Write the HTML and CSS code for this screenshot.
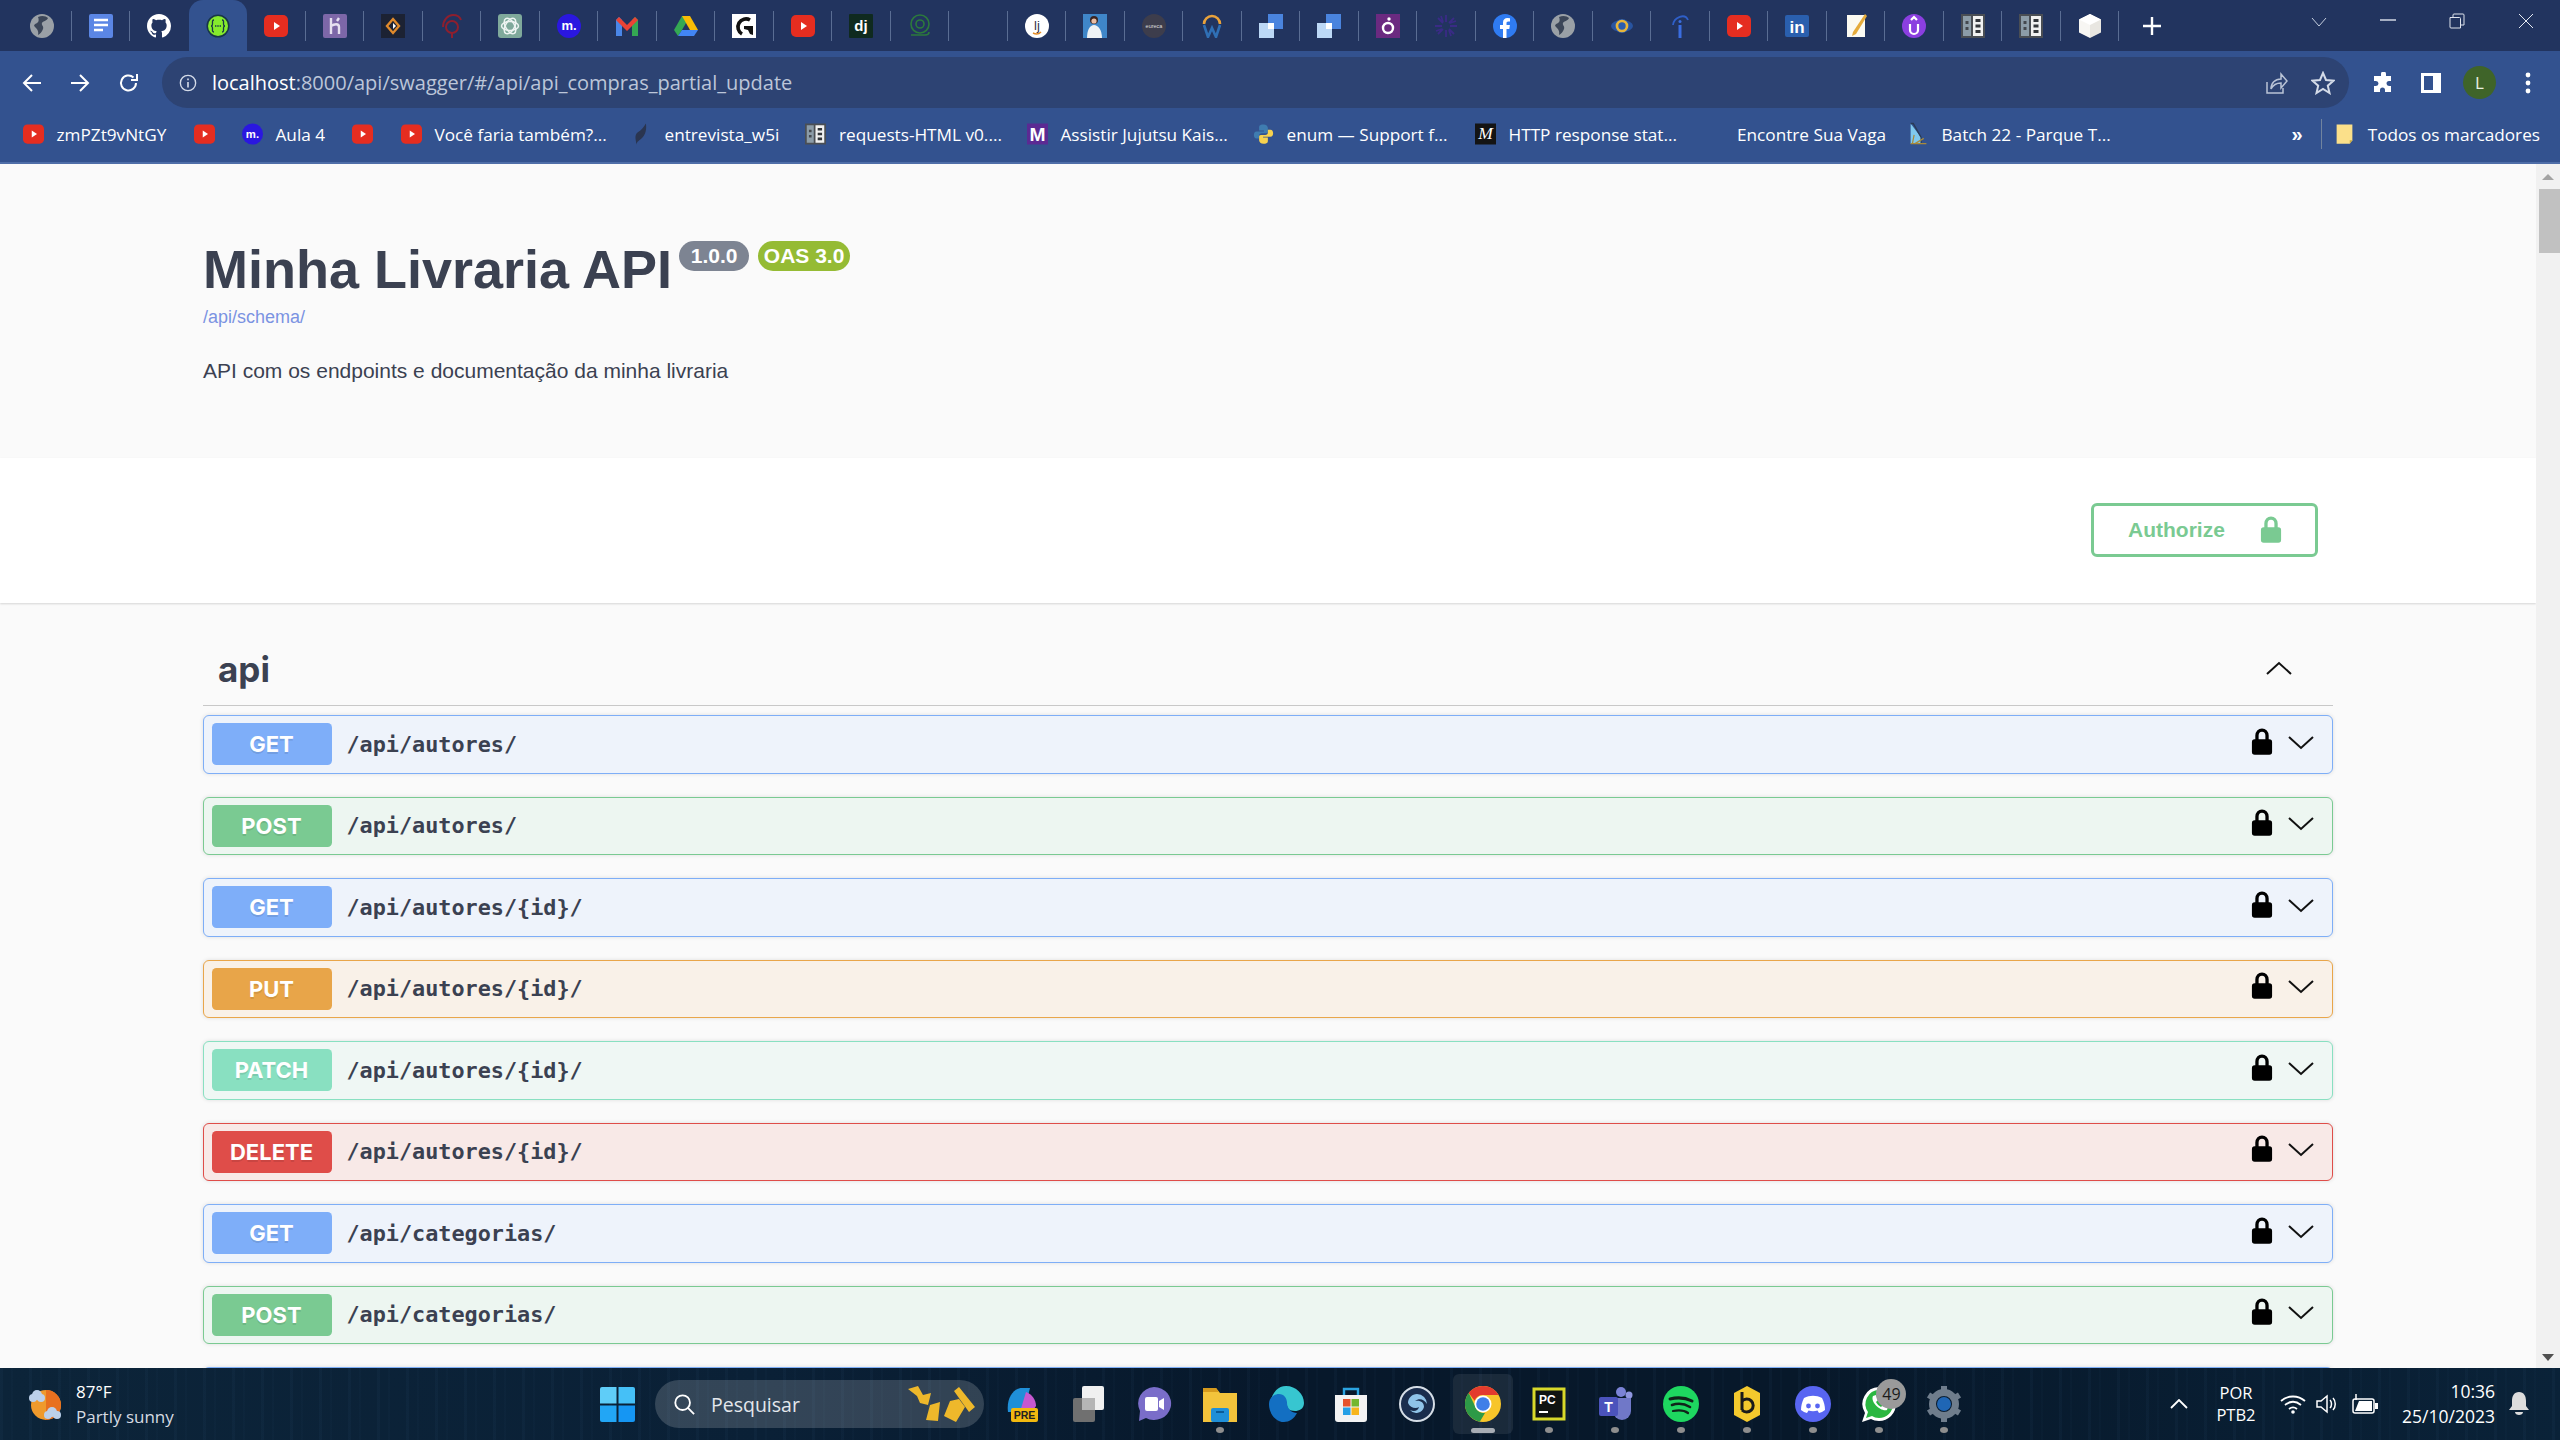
FILE: index.html
```html
<!DOCTYPE html>
<html lang="pt-BR">
<head>
  <meta charset="utf-8">
  <title>Minha Livraria API</title>
  <link rel="stylesheet" href="styles.css">
</head>
<body>
  <svg class="sprites" xmlns="http://www.w3.org/2000/svg">
    <symbol id="i-globe" viewBox="0 0 24 24"><circle cx="12" cy="12" r="12" fill="#9aa0a6"/><path d="M8 3c4-2 8-1 10 1-1 3-5 3-6 5s2 3 1 6-3 5-5 6c1-4-1-6-3-8s0-3 2-4 2-4 1-6z" fill="#3c4658"/></symbol>
    <symbol id="i-docs" viewBox="0 0 24 24"><rect x="0" width="24" height="24" rx="2" fill="#5b86e5"/><path d="M5 6h14M5 11h14M5 16h9" stroke="#fff" stroke-width="2.4"/></symbol>
    <symbol id="i-github" viewBox="0 0 16 16"><path fill="#fff" d="M8 0C3.58 0 0 3.58 0 8c0 3.54 2.29 6.53 5.47 7.59.4.07.55-.17.55-.38 0-.19-.01-.82-.01-1.49-2.01.37-2.53-.49-2.69-.94-.09-.23-.48-.94-.82-1.13-.28-.15-.68-.52-.01-.53.63-.01 1.08.58 1.23.82.72 1.21 1.87.87 2.33.66.07-.52.28-.87.51-1.07-1.78-.2-3.64-.89-3.64-3.95 0-.87.31-1.59.82-2.15-.08-.2-.36-1.02.08-2.12 0 0 .67-.21 2.2.82.64-.18 1.32-.27 2-.27.68 0 1.36.09 2 .27 1.53-1.04 2.2-.82 2.2-.82.44 1.1.16 1.92.08 2.12.51.56.82 1.27.82 2.15 0 3.07-1.87 3.75-3.65 3.95.29.25.54.73.54 1.48 0 1.07-.01 1.93-.01 2.2 0 .21.15.46.55.38A8.013 8.013 0 0016 8c0-4.42-3.58-8-8-8z"/></symbol>
    <symbol id="i-swagger" viewBox="0 0 24 24"><circle cx="12" cy="12" r="11.5" fill="#173647"/><circle cx="12" cy="12" r="10" fill="#85ea2d"/><path d="M8 6c-2 0-1.500 2-1.500 4S5 12 5 12s1.500 0 1.500 2S6 18 8 18M16 6c2 0 1.500 2 1.500 4s1.500 2 1.500 2-1.500 0-1.500 2 .5 4-1.500 4" fill="none" stroke="#173647" stroke-width="1.300"/><path d="M9 12h1.400M11.300 12h1.400M13.600 12H15" stroke="#173647" stroke-width="1.500"/></symbol>
    <symbol id="i-yt" viewBox="0 0 24 24"><rect y="1" width="24" height="22" rx="5" fill="#e52d20"/><path d="M10 8l6 4-6 4z" fill="#fff"/></symbol>
    <symbol id="i-heroku" viewBox="0 0 24 24"><rect width="24" height="24" rx="2" fill="#7d67a8"/><path d="M8 4v16M8 12c3-2 8-3 8 1v7M16 4l-2 3" fill="none" stroke="#e6e0f0" stroke-width="2.400"/></symbol>
    <symbol id="i-diamond" viewBox="0 0 24 24"><rect width="24" height="24" fill="#1c2233"/><path d="M12 5l6 7-6 7-6-7z" fill="none" stroke="#e08a2c" stroke-width="2.400"/><path d="M12 9l3 3-3 3z" fill="#fff"/></symbol>
    <symbol id="i-swirl" viewBox="0 0 24 24"><g fill="none" stroke="#8e1f2e" stroke-width="2"><path d="M3 13C3 6 8 1 13 1c4 0 7 2 8 5"/><circle cx="12" cy="13" r="6"/><path d="M12 19v5"/></g></symbol>
    <symbol id="i-gpt" viewBox="0 0 24 24"><rect width="24" height="24" rx="3" fill="#7fa99b"/><g fill="none" stroke="#eef4f2" stroke-width="1.500"><ellipse cx="12" cy="12" rx="8.500" ry="4.500"/><ellipse cx="12" cy="12" rx="8.500" ry="4.500" transform="rotate(60 12 12)"/><ellipse cx="12" cy="12" rx="8.500" ry="4.500" transform="rotate(120 12 12)"/></g></symbol>
    <symbol id="i-m" viewBox="0 0 24 24"><circle cx="12" cy="12" r="12" fill="#2a17e0"/><text x="12" y="16" text-anchor="middle" font-family="Liberation Sans, sans-serif" font-weight="700" font-size="13" fill="#fff">m.</text></symbol>
    <symbol id="i-gmail" viewBox="0 0 24 24"><path d="M1 22V6l3-3 3 3v16z" fill="#4a86e8"/><path d="M17 22V6l3-3 3 3v16z" fill="#34a853"/><path d="M4 3l8 8 8-8 3 3-11 11L1 6z" fill="#ea4335"/></symbol>
    <symbol id="i-drive" viewBox="0 0 24 24"><path d="M8 2h8l-8 14-4 6-4-6z" fill="#34a853"/><path d="M8 2h8l8 14h-8z" fill="#f9bc05"/><path d="M4 22l4-6h16l-4 6z" fill="#4285f4"/></symbol>
    <symbol id="i-gbox" viewBox="0 0 24 24"><rect width="24" height="24" fill="#fff"/><path d="M18 6a8 8 0 1 0-8 14" fill="none" stroke="#111" stroke-width="3.600"/><path d="M12 12h9v9l-3-1-2-4-4-1z" fill="#111"/></symbol>
    <symbol id="i-dj" viewBox="0 0 24 24"><rect width="24" height="24" rx="1" fill="#0f2a1f"/><text x="12" y="17" text-anchor="middle" font-family="Liberation Sans, sans-serif" font-weight="700" font-size="15" fill="#fff">dj</text></symbol>
    <symbol id="i-rings" viewBox="0 0 24 24"><g fill="none" stroke="#2c7a3c" stroke-width="1.600"><circle cx="12" cy="10" r="9"/><circle cx="12" cy="10" r="4"/><path d="M3 21h14c3 0 4-1 4-3"/></g></symbol>
    <symbol id="i-ij" viewBox="0 0 24 24"><circle cx="12" cy="12" r="12" fill="#fff"/><text x="12" y="16" text-anchor="middle" font-family="Liberation Sans, sans-serif" font-size="13" fill="#334">lj</text><path d="M8 19c3 1.500 6 1 8-1" fill="none" stroke="#e58c25" stroke-width="1.400"/></symbol>
    <symbol id="i-photo" viewBox="0 0 24 24"><rect width="24" height="24" fill="#3f86c9"/><circle cx="11" cy="6" r="4" fill="#3a2420"/><circle cx="11" cy="7" r="2.600" fill="#e9bda4"/><path d="M4 24c0-8 3-13 7-13s8 5 8 13z" fill="#eef1f4"/></symbol>
    <symbol id="i-eureca" viewBox="0 0 24 24"><circle cx="12" cy="12" r="12" fill="#3d3d4c"/><text x="12" y="14" text-anchor="middle" font-family="Liberation Sans, sans-serif" font-size="5.500" fill="#ddd">eureca</text></symbol>
    <symbol id="i-work" viewBox="0 0 24 24"><path d="M4 10a8 8 0 0 1 16 0" fill="none" stroke="#e9a23b" stroke-width="2.600"/><path d="M4 11l4 12 4-9 4 9 4-12" fill="none" stroke="#2f6fb5" stroke-width="2.600"/></symbol>
    <symbol id="i-squares" viewBox="0 0 24 24"><rect x="9" width="15" height="15" fill="#4a84de"/><rect y="9" width="15" height="15" fill="#bcd8f6"/><path d="M9 9h6v6H9z" fill="#fff"/></symbol>
    <symbol id="i-purple-o" viewBox="0 0 24 24"><rect width="24" height="24" fill="#6b2a80"/><circle cx="12" cy="14" r="5" fill="none" stroke="#fff" stroke-width="2.400"/><circle cx="13" cy="5" r="1.700" fill="#fff"/></symbol>
    <symbol id="i-spin" viewBox="0 0 24 24"><g stroke="#3a2b86" stroke-width="1.800"><path d="M12 1v7M12 16v7M1 12h7M16 12h7M4 4l5 5M15 15l5 5M20 4l-5 5M9 15l-5 5M7 2l2 6M17 22l-2-6M2 17l6-2M22 7l-6 2"/></g></symbol>
    <symbol id="i-fb" viewBox="0 0 24 24"><circle cx="12" cy="12" r="12" fill="#2f7bf2"/><path d="M10 24V15H7v-4h3V8.500C10 5.500 11.800 4 14.500 4l2.500.2V7.500h-1.700c-1.400 0-1.800.8-1.800 1.700V11h3.400l-.6 4H13.500v9z" fill="#fff"/></symbol>
    <symbol id="i-ring" viewBox="0 0 24 24"><ellipse cx="12" cy="12" rx="11" ry="6" fill="#2a5db0" opacity=".8"/><circle cx="12" cy="12" r="7" fill="#2a5db0"/><circle cx="12" cy="12" r="5" fill="none" stroke="#e8b53a" stroke-width="2.600"/></symbol>
    <symbol id="i-info" viewBox="0 0 24 24"><path d="M5 11c1-8 12-12 15-5" fill="none" stroke="#2f5fc8" stroke-width="1.800"/><path d="M12 11v13" stroke="#3a6de0" stroke-width="3"/><circle cx="12" cy="7.500" r="1.500" fill="#3a6de0"/></symbol>
    <symbol id="i-in" viewBox="0 0 24 24"><rect y="1" width="24" height="22" rx="2" fill="#2a5fae"/><text x="12" y="19" text-anchor="middle" font-family="Liberation Sans, sans-serif" font-weight="700" font-size="17" fill="#fff">in</text></symbol>
    <symbol id="i-note" viewBox="0 0 24 24"><path d="M3 1h18v22H3z" fill="#fbfaf2"/><path d="M9 18L21 0l2 2L12 20l-4 2z" fill="#e5ab3c"/></symbol>
    <symbol id="i-purple-u" viewBox="0 0 24 24"><circle cx="12" cy="12" r="12" fill="#8b3fe0"/><path d="M8 10v6a4 4 0 0 0 8 0v-6M9 6l3-3 3 3" fill="none" stroke="#fff" stroke-width="2.200"/></symbol>
    <symbol id="i-bars" viewBox="0 0 24 24"><rect width="24" height="24" fill="#4a4e54"/><rect x="2" y="2" width="8" height="20" fill="#8c9ca8"/><rect x="12" y="2" width="10" height="20" fill="#f1f1f1"/><path d="M4.500 7h3v3h-3zM4.500 13h3v3h-3z" fill="#44484e"/><path d="M14.500 5h5v3h-5zM14.500 10.500h5v3h-5zM14.500 16h5v3h-5z" fill="#33363b"/></symbol>
    <symbol id="i-cube" viewBox="0 0 24 24"><path d="M12 0l11 5.500v13L12 24z" fill="#e8e6e1"/><path d="M12 0L1 5.500v13L12 24z" fill="#f7f6f3"/><path d="M1 5.500L12 0l11 5.500L12 11z" fill="#fff"/></symbol>
    <symbol id="i-feather" viewBox="0 0 24 24"><path d="M17 0c1 6 0 13-5 17-2 2-5 3-6 7 0-5-2-8 0-12 2-3 6-3 11-12z" fill="#2a3550"/></symbol>
    <symbol id="i-mbig" viewBox="0 0 24 24"><rect width="24" height="24" fill="#5b2a93"/><text x="12" y="20" text-anchor="middle" font-family="Liberation Sans, sans-serif" font-weight="700" font-size="22" fill="#fff">M</text></symbol>
    <symbol id="i-python" viewBox="0 0 24 24"><path d="M12 1C7 1 7 3 7 5v3h5.500v1H4c-2 0-3 2-3 4s1 4 3 4h3v-3c0-2 1-3 3-3h5c1.500 0 2-1 2-2V5c0-2-2-4-5-4z" fill="#3f7cb0"/><path d="M12 23c5 0 5-2 5-4v-3h-5.500v-1H20c2 0 3-2 3-4s-1-4-3-4h-3v3c0 2-1 3-3 3H9c-1.500 0-2 1-2 2v4c0 2 2 4 5 4z" fill="#f7d24f"/></symbol>
    <symbol id="i-mdark" viewBox="0 0 24 24"><rect width="24" height="24" fill="#141414"/><text x="12" y="18" text-anchor="middle" font-family="Liberation Serif, serif" font-style="italic" font-size="20" fill="#fff">M</text></symbol>
    <symbol id="i-batch" viewBox="0 0 24 24"><path d="M3 0l12 16v7H3z" fill="#7fc8ee"/><path d="M3 0h3l9 16v7" fill="none" stroke="#2a3a55" stroke-width="1.500"/><path d="M3 23h18M8 23l10-6M5 23l2-10" stroke="#a98a3a" stroke-width="1.400"/></symbol>
    <symbol id="i-folder" viewBox="0 0 24 24"><path d="M3 1h18v18l-3 4H3z" fill="#fbe08a"/><path d="M18 23v-4h3z" fill="#c9a93e"/></symbol>
    <symbol id="i-lock" viewBox="0 0 24 30"><path d="M6.500 13V8a5.500 6 0 0 1 11 0v5" fill="none" stroke="currentColor" stroke-width="3.600"/><rect x="1" y="12" width="22" height="17" rx="3" fill="currentColor"/></symbol>
    <symbol id="i-chev" viewBox="0 0 26 14"><path d="M1 1l12 11L25 1" fill="none" stroke="currentColor" stroke-width="2"/></symbol>
  </svg>

  <header class="tabstrip">
    <div class="tab"><svg><use href="#i-globe"/></svg></div>
    <div class="tab"><svg><use href="#i-docs"/></svg></div>
    <div class="tab no-sep"><svg><use href="#i-github"/></svg></div>
    <div class="tab active"><svg><use href="#i-swagger"/></svg></div>
    <div class="tab"><svg><use href="#i-yt"/></svg></div>
    <div class="tab"><svg><use href="#i-heroku"/></svg></div>
    <div class="tab"><svg><use href="#i-diamond"/></svg></div>
    <div class="tab"><svg><use href="#i-swirl"/></svg></div>
    <div class="tab"><svg><use href="#i-gpt"/></svg></div>
    <div class="tab"><svg><use href="#i-m"/></svg></div>
    <div class="tab"><svg><use href="#i-gmail"/></svg></div>
    <div class="tab"><svg><use href="#i-drive"/></svg></div>
    <div class="tab"><svg><use href="#i-gbox"/></svg></div>
    <div class="tab"><svg><use href="#i-yt"/></svg></div>
    <div class="tab"><svg><use href="#i-dj"/></svg></div>
    <div class="tab"><svg><use href="#i-rings"/></svg></div>
    <div class="tab"></div>
    <div class="tab"><svg><use href="#i-ij"/></svg></div>
    <div class="tab"><svg><use href="#i-photo"/></svg></div>
    <div class="tab"><svg><use href="#i-eureca"/></svg></div>
    <div class="tab"><svg><use href="#i-work"/></svg></div>
    <div class="tab"><svg><use href="#i-squares"/></svg></div>
    <div class="tab"><svg><use href="#i-squares"/></svg></div>
    <div class="tab"><svg><use href="#i-purple-o"/></svg></div>
    <div class="tab"><svg><use href="#i-spin"/></svg></div>
    <div class="tab"><svg><use href="#i-fb"/></svg></div>
    <div class="tab"><svg><use href="#i-globe"/></svg></div>
    <div class="tab"><svg><use href="#i-ring"/></svg></div>
    <div class="tab"><svg><use href="#i-info"/></svg></div>
    <div class="tab"><svg><use href="#i-yt"/></svg></div>
    <div class="tab"><svg><use href="#i-in"/></svg></div>
    <div class="tab"><svg><use href="#i-note"/></svg></div>
    <div class="tab"><svg><use href="#i-purple-u"/></svg></div>
    <div class="tab"><svg><use href="#i-bars"/></svg></div>
    <div class="tab"><svg><use href="#i-bars"/></svg></div>
    <div class="tab"><svg><use href="#i-cube"/></svg></div>
    <div class="new-tab">
      <svg viewBox="0 0 18 18"><path d="M9 0v18M0 9h18" stroke="#fff" stroke-width="2.400"/></svg>
    </div>
    <div class="win-controls">
      <svg viewBox="0 0 16 16"><path d="M1 5l7 8 7-8" fill="none" stroke="#c5cede" stroke-width="1"/></svg>
      <svg viewBox="0 0 16 16"><path d="M0 7h16" stroke="#dfe4ee" stroke-width="1.400"/></svg>
      <svg viewBox="0 0 16 16"><path d="M1 4.500h9.500a1 1 0 0 1 1 1V15H2a1 1 0 0 1-1-1zM4 4V2a1 1 0 0 1 1-1h9a1 1 0 0 1 1 1v10h-3.500" fill="none" stroke="#dfe4ee" stroke-width="1"/></svg>
      <svg viewBox="0 0 16 16"><path d="M1 1l14 14M15 1L1 15" stroke="#e6eaf2" stroke-width="1"/></svg>
    </div>
  </header>

  <div class="toolbar">
    <div class="tool"><svg viewBox="0 0 22 22"><path d="M20 11H3M11 3l-8 8 8 8" fill="none" stroke="#fff" stroke-width="2"/></svg></div>
    <div class="tool"><svg viewBox="0 0 22 22"><path d="M2 11h17M11 3l8 8-8 8" fill="none" stroke="#fff" stroke-width="2"/></svg></div>
    <div class="tool"><svg viewBox="0 0 22 22"><path d="M18 11a7.500 7.500 0 1 1-2.500-5.600M19 2v6h-6" fill="none" stroke="#fff" stroke-width="2"/></svg></div>
    <div class="omnibox">
      <svg class="omni-info" viewBox="0 0 20 20"><circle cx="10" cy="10" r="8.500" fill="none" stroke="#d4dbe8" stroke-width="1.500"/><path d="M10 9v6M10 5v2" stroke="#d4dbe8" stroke-width="1.800"/></svg>
      <span class="url"><span class="host">localhost</span>:8000/api/swagger/#/api/api_compras_partial_update</span>
      <svg class="omni-share" viewBox="0 0 24 24"><path d="M3 11v11h16v-5M7 18c0-6 4-10 10-10V3l6 7-6 7v-5c-4 0-8 2-10 6z" fill="none" stroke="#b9c3d6" stroke-width="1.500"/></svg>
      <svg class="omni-star" viewBox="0 0 24 24"><path d="M12 2l3 7 7.500.7-5.700 5 1.700 7.300L12 18l-6.500 4 1.700-7.300-5.700-5L9 9z" fill="none" stroke="#d4dbe8" stroke-width="2"/></svg>
    </div>
    <div class="tool"><svg viewBox="0 0 22 22"><path d="M9 2a2.500 2.500 0 0 1 5 0v2h5v5h-2a2.500 2.500 0 0 0 0 5h2v6h-6v-2a2.500 2.500 0 0 0-5 0v2H2v-6h2a2.500 2.500 0 0 0 0-5H2V4h7z" fill="#fff"/></svg></div>
    <div class="tool"><svg viewBox="0 0 22 22"><path d="M1 1h20v20H1zM4 4v14h9V4z" fill="#fff" fill-rule="evenodd"/></svg></div>
    <div class="tool"><span class="avatar">L</span></div>
    <div class="tool"><svg viewBox="0 0 22 22"><g fill="#fff"><circle cx="11" cy="3" r="2.400"/><circle cx="11" cy="11" r="2.400"/><circle cx="11" cy="19" r="2.400"/></g></svg></div>
  </div>

  <nav class="bookmarks">
    <a class="bm"><svg><use href="#i-yt"/></svg>zmPZt9vNtGY</a>
    <a class="bm"><svg><use href="#i-yt"/></svg></a>
    <a class="bm"><svg><use href="#i-m"/></svg>Aula 4</a>
    <a class="bm"><svg><use href="#i-yt"/></svg></a>
    <a class="bm"><svg><use href="#i-yt"/></svg>Você faria também?...</a>
    <a class="bm"><svg><use href="#i-feather"/></svg>entrevista_w5i</a>
    <a class="bm"><svg><use href="#i-bars"/></svg>requests-HTML v0....</a>
    <a class="bm"><svg><use href="#i-mbig"/></svg>Assistir Jujutsu Kais...</a>
    <a class="bm"><svg><use href="#i-python"/></svg>enum — Support f...</a>
    <a class="bm"><svg><use href="#i-mdark"/></svg>HTTP response stat...</a>
    <a class="bm bm-noicon">Encontre Sua Vaga</a>
    <a class="bm"><svg><use href="#i-batch"/></svg>Batch 22 - Parque T...</a>
    <div class="bm-end">
      <span class="bm-more">»</span>
      <span class="bm-sep"></span>
      <a class="bm"><svg><use href="#i-folder"/></svg>Todos os marcadores</a>
    </div>
  </nav>

  <div class="viewport">
    <main class="page">
      <section class="info">
        <div class="wrapper">
          <div class="title-row">
            <h1>Minha Livraria API</h1>
            <span class="badge version">1.0.0</span>
            <span class="badge oas">OAS 3.0</span>
          </div>
          <a class="schema-link">/api/schema/</a>
          <p class="description">API com os endpoints e documentação da minha livraria</p>
        </div>
      </section>

      <section class="scheme">
        <div class="wrapper scheme-inner">
          <button class="authorize">Authorize <svg><use href="#i-lock"/></svg></button>
        </div>
      </section>

      <section class="wrapper">
        <div class="tag">
          <h2>api</h2>
          <svg class="tag-arrow"><use href="#i-chev"/></svg>
        </div>

        <div class="opblock get">
          <span class="method">GET</span><span class="path">/api/autores/</span>
          <svg class="row-lock"><use href="#i-lock"/></svg><svg class="row-chev"><use href="#i-chev"/></svg>
        </div>
        <div class="opblock post">
          <span class="method">POST</span><span class="path">/api/autores/</span>
          <svg class="row-lock"><use href="#i-lock"/></svg><svg class="row-chev"><use href="#i-chev"/></svg>
        </div>
        <div class="opblock get">
          <span class="method">GET</span><span class="path">/api/autores/{id}/</span>
          <svg class="row-lock"><use href="#i-lock"/></svg><svg class="row-chev"><use href="#i-chev"/></svg>
        </div>
        <div class="opblock put">
          <span class="method">PUT</span><span class="path">/api/autores/{id}/</span>
          <svg class="row-lock"><use href="#i-lock"/></svg><svg class="row-chev"><use href="#i-chev"/></svg>
        </div>
        <div class="opblock patch">
          <span class="method">PATCH</span><span class="path">/api/autores/{id}/</span>
          <svg class="row-lock"><use href="#i-lock"/></svg><svg class="row-chev"><use href="#i-chev"/></svg>
        </div>
        <div class="opblock delete">
          <span class="method">DELETE</span><span class="path">/api/autores/{id}/</span>
          <svg class="row-lock"><use href="#i-lock"/></svg><svg class="row-chev"><use href="#i-chev"/></svg>
        </div>
        <div class="opblock get">
          <span class="method">GET</span><span class="path">/api/categorias/</span>
          <svg class="row-lock"><use href="#i-lock"/></svg><svg class="row-chev"><use href="#i-chev"/></svg>
        </div>
        <div class="opblock post">
          <span class="method">POST</span><span class="path">/api/categorias/</span>
          <svg class="row-lock"><use href="#i-lock"/></svg><svg class="row-chev"><use href="#i-chev"/></svg>
        </div>
        <div class="opblock get"></div>
      </section>
    </main>
    <div class="scrollbar">
      <span class="sb-up"></span>
      <span class="sb-thumb"></span>
      <span class="sb-down"></span>
    </div>
  </div>

  <footer class="taskbar">
    <div class="weather">
      <svg viewBox="0 0 36 36"><ellipse cx="19" cy="19" rx="15" ry="15" fill="#ef9a2c"/><path d="M19 4a15 15 0 0 1 0 30z" fill="#e8701f"/><g fill="#bcd0ea"><circle cx="10" cy="9" r="5"/><circle cx="6" cy="12" r="4"/><circle cx="14" cy="12" r="4"/><circle cx="25" cy="26" r="5"/><circle cx="21" cy="29" r="4"/><circle cx="30" cy="29" r="4"/></g></svg>
      <div class="weather-text">
        <span>87°F</span>
        <span class="weather-sub">Partly sunny</span>
      </div>
    </div>
    <svg class="win-logo" viewBox="0 0 35 35"><path d="M0 2a2 2 0 0 1 2-2h14.500v16.500H0z" fill="#5fcdf8"/><path d="M18.500 0H33a2 2 0 0 1 2 2v14.500H18.500z" fill="#45c0f7"/><path d="M0 18.500h16.500V35H2a2 2 0 0 1-2-2z" fill="#22a6f5"/><path d="M18.500 18.500H35V33a2 2 0 0 1-2 2H18.500z" fill="#1596f3"/></svg>
    <div class="search">
      <svg class="search-glass" viewBox="0 0 24 24"><circle cx="10.500" cy="10.500" r="8" fill="none" stroke="#fff" stroke-width="2"/><path d="M16 16l7 7" stroke="#fff" stroke-width="2"/></svg>
      <span>Pesquisar</span>
      <svg class="search-deco" viewBox="0 0 68 36"><path d="M0 3l10-3 5 9 8-2-3 12-8-2-3-7zM18 34l4-15 10-3-2 19zM36 30l6-15 9-2 6 8-9 15zM46 5l5-4 16 20-6 5z" fill="#eeb82b"/></svg>
    </div>
    <div class="apps">
      <div class="app"><svg viewBox="0 0 36 36"><path d="M4 26C2 12 10 2 18 2h8l-6 24z" fill="#1f8fd8"/><path d="M16 26l6-20c6 2 10 8 10 14l-4 6z" fill="#c558d0"/><rect x="7" y="22" width="27" height="14" rx="2" fill="#f2b90f"/><text x="20.500" y="33" text-anchor="middle" font-family="Liberation Sans, sans-serif" font-weight="700" font-size="10.500" fill="#222">PRE</text></svg></div>
      <div class="app"><svg viewBox="0 0 36 36"><rect x="3" y="12" width="22" height="24" rx="2" fill="#707070"/><rect x="12" y="0" width="22" height="24" rx="2" fill="#f0f0f0"/><rect x="12" y="12" width="13" height="12" fill="#b5b5b5"/></svg></div>
      <div class="app"><svg viewBox="0 0 36 36"><path d="M18 1a17 16.500 0 1 1-8 31l-7 3 1-10A17 16.500 0 0 1 18 1z" fill="#7a6dc9"/><rect x="9" y="11" width="13" height="14" rx="2" fill="#fff"/><path d="M23 15l5-3v12l-5-3z" fill="#fff"/></svg></div>
      <div class="app app-dot"><svg viewBox="0 0 36 36"><path d="M1 2h13l4 5h17v29H1z" fill="#f3c33b"/><path d="M1 2h13l3 4H1z" fill="#d69a1d"/><rect x="9" y="22" width="18" height="14" rx="2" fill="#1f8fd8"/><path d="M14 26h8" stroke="#0b5c99" stroke-width="2"/></svg></div>
      <div class="app"><svg viewBox="0 0 36 36"><path d="M18 0c10 0 18 8 18 17 0 6-5 8-9 8-6 0-8-3-8-6 0-4-3-7-7-7-6 0-11 6-11 10C3 8 9 0 18 0z" fill="#37c6d0"/><path d="M1 18c0-6 5-10 10-10 5 0 8 4 8 9 0 6 5 10 10 10-3 6-8 9-13 9C8 36 1 28 1 18z" fill="#136fc2"/></svg></div>
      <div class="app"><svg viewBox="0 0 36 36"><path d="M2 9h32v24a3 3 0 0 1-3 3H5a3 3 0 0 1-3-3z" fill="#f3f3f3"/><path d="M11 9V3h14v6" fill="none" stroke="#2ba3e0" stroke-width="2.400"/><rect x="10" y="13" width="7.500" height="7.500" fill="#e5532d"/><rect x="18.500" y="13" width="7.500" height="7.500" fill="#74b72e"/><rect x="10" y="21.500" width="7.500" height="7.500" fill="#26a0e6"/><rect x="18.500" y="21.500" width="7.500" height="7.500" fill="#f7b51c"/></svg></div>
      <div class="app"><svg viewBox="0 0 36 36"><circle cx="18" cy="18" r="17" fill="#1a2d4d" stroke="#d5dde6" stroke-width="2"/><path d="M18 8a10 10 0 0 1 10 10c-3-5-8-6-12-3 5-1 9 1 9 6a8 8 0 0 1-14 3c4 2 8 1 9-3-3 2-9 1-11-4 0-5 4-9 9-9z" fill="#8fc3e8"/></svg></div>
      <div class="app app-active"><svg viewBox="0 0 36 36"><circle cx="18" cy="18" r="18" fill="#f7c52a"/><path d="M18 0a18 18 0 0 1 15.600 9H18a9 9 0 0 0-8.400 5.800L3.700 7A18 18 0 0 1 18 0z" fill="#e33b2e"/><path d="M3.700 7l7.500 15.500A9 9 0 0 0 20 27l-5.200 8.700A18 18 0 0 1 3.700 7z" fill="#2d9a47"/><circle cx="18" cy="18" r="8.500" fill="#fff"/><circle cx="18" cy="18" r="6.800" fill="#3f7fe8"/></svg></div>
      <div class="app app-dot"><svg viewBox="0 0 36 36"><rect x="3" y="3" width="30" height="30" fill="#0f1412" stroke="#d8d92a" stroke-width="3"/><text x="8" y="18" font-family="Liberation Sans, sans-serif" font-weight="700" font-size="12" fill="#fff">PC</text><path d="M8 26h9" stroke="#fff" stroke-width="2"/></svg></div>
      <div class="app app-dot"><svg viewBox="0 0 36 36"><circle cx="24" cy="6" r="5" fill="#7b83d6"/><circle cx="32" cy="9" r="3.500" fill="#8f96e0"/><path d="M16 12h18v13a9 9 0 0 1-18 0z" fill="#7078c8"/><rect x="2" y="11" width="19" height="19" rx="2" fill="#4b53bc"/><text x="11.500" y="26" text-anchor="middle" font-family="Liberation Sans, sans-serif" font-weight="700" font-size="14" fill="#fff">T</text></svg></div>
      <div class="app app-dot"><svg viewBox="0 0 36 36"><circle cx="18" cy="18" r="18" fill="#1ed760"/><g fill="none" stroke="#10231a" stroke-linecap="round"><path d="M7 13c8-2 16-1 22 2" stroke-width="3"/><path d="M9 19c6-2 13-1 18 2" stroke-width="2.600"/><path d="M10 25c5-1 11-1 15 2" stroke-width="2.200"/></g></svg></div>
      <div class="app app-dot"><svg viewBox="0 0 36 36"><path d="M18 0l13 7v22l-13 7-13-7V7z" fill="#f4c92d"/><path d="M13 6v18" stroke="#1b1b1b" stroke-width="3"/><path d="M13 15a6.500 6.500 0 1 1 0 9" fill="none" stroke="#1b1b1b" stroke-width="3"/></svg></div>
      <div class="app app-dot"><svg viewBox="0 0 36 36"><circle cx="18" cy="18" r="18" fill="#5865f2"/><path d="M9 12c6-3 12-3 18 0 2 4 3 8 3 12-2 1.500-4 2.500-6 3l-1.500-2.500c-3 1-6 1-9 0L12 27c-2-.5-4-1.500-6-3 0-4 1-8 3-12z" fill="#fff"/><circle cx="13.500" cy="20" r="2.400" fill="#5865f2"/><circle cx="22.500" cy="20" r="2.400" fill="#5865f2"/></svg></div>
      <div class="app app-dot"><svg viewBox="0 0 36 36"><path d="M18 1a17 17 0 0 1 0 34c-3 0-6-1-8-2l-9 3 3-9a17 17 0 0 1 14-26z" fill="#fff"/><path d="M18 4a14 14 0 0 1 0 28c-3 0-5-1-7-2l-6 2 2-6A14 14 0 0 1 18 4z" fill="#2bb741"/><path d="M12 10l3-1 2 5-2 2c1 2 3 4 5 5l2-2 5 2-1 3c-6 2-17-8-14-14z" fill="#fff"/></svg><span class="app-badge">49</span></div>
      <div class="app app-dot"><svg viewBox="0 0 36 36"><circle cx="18" cy="18" r="11.500" fill="none" stroke="#6f7d8c" stroke-width="7"/><g stroke="#6f7d8c" stroke-width="6"><path d="M18 0v6M18 30v6M2.500 9l5 3M28.500 24l5 3M2.500 27l5-3M28.500 12l5-3"/></g><circle cx="18" cy="18" r="7" fill="#1f66b5"/></svg></div>
    </div>
    <div class="tray">
      <div class="tray-cell chev"><svg viewBox="0 0 18 10"><path d="M1 9l8-8 8 8" fill="none" stroke="#fff" stroke-width="1.800"/></svg></div>
      <div class="tray-lang"><span>POR</span><span>PTB2</span></div>
      <div class="tray-cell wifi"><svg viewBox="0 0 26 20"><g fill="none" stroke="#fff" stroke-width="1.800"><path d="M1 7c7-6 17-6 24 0"/><path d="M5 11c5-4 11-4 16 0"/><path d="M9 15c2.500-2 5.500-2 8 0"/></g><circle cx="13" cy="18" r="1.800" fill="#fff"/></svg></div>
      <div class="tray-cell speaker"><svg viewBox="0 0 24 20"><path d="M1 7h4l6-5v16l-6-5H1z" fill="none" stroke="#fff" stroke-width="1.500"/><path d="M14 6c2 2 2 6 0 8M17 4c3 3 3 9 0 12" fill="none" stroke="#fff" stroke-width="1.500"/></svg></div>
      <div class="tray-cell battery"><svg viewBox="0 0 26 20"><rect x="1" y="5" width="21" height="14" rx="2" fill="none" stroke="#fff" stroke-width="1.500"/><path d="M3 17l4-10h13v10z" fill="#fff"/><rect x="23" y="9" width="3" height="6" fill="#fff"/><path d="M4 0v6" stroke="#fff" stroke-width="1.500"/></svg></div>
      <div class="clock"><span>10:36</span><span>25/10/2023</span></div>
      <svg class="bell" viewBox="0 0 22 24"><path d="M11 0c5 0 7 4 7 9v5l3 4H1l3-4V9c0-5 2-9 7-9z" fill="#dcdcdc"/><path d="M7 20h8c0 2-2 3-4 3s-4-1-4-3z" fill="#dcdcdc"/></svg>
    </div>
  </footer>
</body>
</html>
```

FILE: styles.css
```css
* { box-sizing: border-box; }
body {
  margin: 0;
  height: 1440px;
  overflow: hidden;
  display: flex;
  flex-direction: column;
  font-family: "Liberation Sans", Arial, sans-serif;
  color: #3b4151;
}
.sprites { display: none; }

/* browser chrome */
.tabstrip {
  height: 51px;
  flex: none;
  display: flex;
  padding-left: 13px;
  background: #22345f;
}
.tab {
  width: 58.5px;
  height: 51px;
  flex: none;
  display: flex;
  align-items: center;
  justify-content: center;
  position: relative;
}
.tab svg { width: 24px; height: 24px; }
.tab::after {
  content: "";
  position: absolute;
  right: 0;
  top: 11px;
  height: 30px;
  width: 1px;
  background: #5a6d93;
}
.tab.no-sep::after { display: none; }
.tab.active {
  background: #33528f;
  border-radius: 14px 14px 0 0;
}
.tab.active::after { display: none; }
.new-tab {
  width: 18px;
  margin-left: 24px;
  display: flex;
  align-items: center;
}
.new-tab svg { width: 18px; height: 18px; }
.win-controls {
  margin-left: auto;
  padding-right: 26px;
  display: flex;
  gap: 53px;
  padding-top: 13px;
}
.win-controls svg { width: 16px; height: 16px; }

.toolbar {
  height: 57px;
  flex: none;
  display: flex;
  align-items: flex-end;
  padding: 0 8px;
  background: #33528f;
}
.tool {
  width: 48.3px;
  height: 51px;
  flex: none;
  display: flex;
  align-items: center;
  justify-content: center;
}
.tool svg { width: 22px; height: 22px; }
.omnibox {
  flex: 1;
  height: 51px;
  margin: 0 10px 0 9px;
  padding: 0 14px 0 17px;
  display: flex;
  align-items: center;
  background: #2d4373;
  border-radius: 26px;
}
.omni-info { width: 18px; height: 18px; margin-right: 15px; }
.url {
  font-family: "Open Sans", sans-serif;
  font-size: 20px;
  color: #bcc6d9;
  white-space: nowrap;
}
.host { color: #fff; }
.omni-share { width: 24px; height: 24px; margin-left: auto; }
.omni-star { width: 24px; height: 24px; margin-left: 23px; }
.avatar {
  width: 33px;
  height: 33px;
  border-radius: 50%;
  background: #3f6429;
  color: #e8efe0;
  font-family: "Open Sans", sans-serif;
  font-size: 17px;
  display: flex;
  align-items: center;
  justify-content: center;
}

.bookmarks {
  height: 56px;
  flex: none;
  display: grid;
  grid-template-columns: 171.5px 47.5px 110px 49px 230px 174.5px 221.5px 226px 222px 262.5px 170.5px 220px 1fr;
  align-items: center;
  padding-left: 10.5px;
  padding-bottom: 2px;
  background: #33528f;
  border-bottom: 2px solid #4f6ea8;
}
.bm {
  display: flex;
  align-items: center;
  gap: 13px;
  padding-left: 12px;
  font-family: "Open Sans", sans-serif;
  font-size: 17.2px;
  color: #fff;
  white-space: nowrap;
}
.bm svg { width: 21px; height: 24px; flex: none; }
.bm-noicon { padding-left: 12px; }
.bm-end {
  display: flex;
  align-items: center;
  justify-content: flex-end;
  padding-right: 20px;
}
.bm-more { color: #fff; font-size: 20px; font-weight: 700; margin-right: 18px; }
.bm-sep { width: 1px; height: 30px; background: #71849f; }

/* swagger page */
.viewport {
  flex: none;
  height: 1204px;
  display: flex;
  overflow: hidden;
  background: #fafafa;
}
.page { flex: 1; overflow: hidden; }
.wrapper {
  max-width: 2190px;
  margin: 0 auto;
  padding: 0 30px;
}
.info {
  height: 294px;
  padding-top: 72px;
  background: #fafafa;
}
.title-row { display: flex; align-items: flex-start; height: 62px; }
.title-row h1 {
  margin: 2px 0 0;
  font-size: 54px;
  line-height: 62px;
  font-weight: 700;
  color: #3b4151;
}
.badge {
  height: 30px;
  border-radius: 15px;
  color: #fff;
  font-size: 21px;
  font-weight: 700;
  line-height: 30px;
  text-align: center;
  white-space: nowrap;
  margin-top: 5px;
}
.version { width: 70px; margin-left: 7px; background: #7d8492; }
.oas { width: 92px; margin-left: 9px; background: #95bb34; }
.schema-link {
  display: block;
  margin-top: 8px;
  font-size: 18px;
  line-height: 22px;
  color: #7a93e2;
}
.description {
  margin: 30px 0 0;
  font-size: 21px;
  line-height: 26px;
  color: #3b4151;
}
.scheme {
  height: 145px;
  background: #fff;
  box-shadow: 0 1px 2px 0 rgba(0,0,0,0.15);
  position: relative;
}
.scheme-inner {
  display: flex;
  justify-content: flex-end;
  padding-top: 45px;
  padding-right: 45px;
}
.authorize {
  width: 227px;
  height: 54px;
  border: 3px solid #7aca92;
  border-radius: 6px;
  background: transparent;
  color: #7aca92;
  font-family: "Liberation Sans", sans-serif;
  font-size: 21px;
  font-weight: 700;
  display: flex;
  align-items: center;
  padding: 0 33px 0 34px;
  justify-content: space-between;
}
.authorize svg { width: 22px; height: 28px; }
.tag {
  height: 103px;
  display: flex;
  align-items: center;
  justify-content: space-between;
  padding: 27px 32px 0 15px;
  border-bottom: 1.5px solid #c8c8c8;
  margin-bottom: 9px;
}
.tag h2 {
  margin: 3px 0 0;
  font-family: Inter, sans-serif;
  font-size: 35px;
  font-weight: 700;
  color: #3b4151;
}
.tag-arrow { width: 26px; height: 14px; transform: rotate(180deg); color: #111; margin-right: 9px; }

.opblock {
  height: 58.5px;
  margin-bottom: 23px;
  padding: 0 18px 0 7.500px;
  display: flex;
  align-items: center;
  border-width: 1.5px;
  border-style: solid;
  border-radius: 6px;
  box-shadow: 0 0 4px rgba(0,0,0,0.12);
}
.method {
  width: 120px;
  height: 42px;
  flex: none;
  border-radius: 4.5px;
  color: #fff;
  font-family: Inter, sans-serif;
  font-size: 22px;
  font-weight: 700;
  line-height: 42px;
  text-align: center;
  text-shadow: 0 1.5px 0 rgba(0,0,0,0.1);
}
.path {
  margin-left: 15px;
  font-family: "DejaVu Sans Mono", monospace;
  font-size: 21.8px;
  font-weight: 700;
  color: #3b4151;
}
.row-lock { width: 22px; height: 28px; margin: 0 0 5px auto; color: #000; }
.row-chev { width: 26px; height: 14px; margin: 0 0 3px 15px; color: #111; }
.get { background: #eef3fb; border-color: #7eaef7; }
.get .method { background: #7eaef9; }
.post { background: #edf6f1; border-color: #7aca92; }
.post .method { background: #7aca92; }
.put { background: #f9f1e8; border-color: #e9a64a; }
.put .method { background: #e8a549; }
.patch { background: #eff7f4; border-color: #89e0c1; }
.patch .method { background: #89e0c1; }
.delete { background: #f8e9e7; border-color: #df4d49; }
.delete .method { background: #df4d49; }

.scrollbar {
  width: 24px;
  flex: none;
  display: flex;
  flex-direction: column;
  align-items: center;
  background: #f1f1f1;
}
.sb-up, .sb-down {
  width: 0;
  height: 0;
  border-left: 6px solid transparent;
  border-right: 6px solid transparent;
}
.sb-up { margin-top: 10px; border-bottom: 6px solid #a3a3a3; }
.sb-thumb { width: 21px; height: 64px; margin: 9px 0 0 2px; background: #c1c1c1; }
.sb-down { margin-top: auto; margin-bottom: 7px; border-top: 7px solid #505050; }

/* windows taskbar */
.taskbar {
  flex: 1;
  display: flex;
  align-items: center;
  color: #fff;
  font-family: "Open Sans", sans-serif;
  background:
    repeating-linear-gradient(90deg, rgba(60,100,140,0.07) 0 3px, transparent 3px 11px, rgba(60,100,140,0.04) 11px 13px, transparent 13px 29px),
    linear-gradient(90deg, #0c2439 0%, #0a2036 30%, #07182b 50%, #07182a 70%, #0a2238 100%);
}
.weather {
  width: 600px;
  padding-left: 27px;
  display: flex;
  align-items: center;
  gap: 13px;
}
.weather svg { width: 36px; height: 36px; }
.weather-text { display: flex; flex-direction: column; font-size: 17px; line-height: 25px; }
.weather-sub { color: #d5dbe2; }
.win-logo { width: 35px; height: 35px; flex: none; }
.search {
  width: 329px;
  height: 48px;
  margin-left: 20px;
  padding: 0 8px 0 18px;
  flex: none;
  display: flex;
  align-items: center;
  border-radius: 24px;
  background: rgba(255,255,255,0.17);
  font-size: 19.5px;
  color: #e3e7ec;
}
.search-glass { width: 22px; height: 24px; margin-right: 16px; }
.search-deco { width: 68px; height: 36px; margin-left: auto; }
.apps { display: flex; margin-left: 5px; }
.app {
  width: 65.9px;
  height: 72px;
  flex: none;
  display: flex;
  align-items: center;
  justify-content: center;
  position: relative;
}
.app svg { width: 36px; height: 36px; }
.app-dot::after {
  content: "";
  position: absolute;
  left: 50%;
  bottom: 7px;
  width: 8px;
  height: 6px;
  margin-left: -4px;
  border-radius: 50%;
  background: #8e8e8e;
}
.app-active::before {
  content: "";
  position: absolute;
  left: 3px;
  right: 3px;
  top: 6px;
  bottom: 6px;
  border-radius: 6px;
  background: rgba(255,255,255,0.08);
}
.app-active svg { position: relative; }
.app-active::after {
  content: "";
  position: absolute;
  left: 50%;
  bottom: 7px;
  width: 24px;
  height: 5px;
  margin-left: -12px;
  border-radius: 3px;
  background: #a8adb4;
}
.app-badge {
  position: absolute;
  right: 5px;
  top: 11px;
  width: 30px;
  height: 30px;
  border-radius: 50%;
  background: #9a9a9a;
  color: #1b1b1b;
  font-size: 16px;
  line-height: 30px;
  text-align: center;
}
.tray { flex: 1; display: flex; align-items: center; justify-content: flex-end; padding-right: 30px; }
.tray-cell { flex: none; display: flex; align-items: center; justify-content: center; }
.chev { width: 38px; }
.chev svg { width: 18px; height: 10px; }
.tray-lang {
  width: 76px;
  display: flex;
  flex-direction: column;
  align-items: center;
  font-size: 16.5px;
  line-height: 22px;
}
.wifi { width: 38px; }
.wifi svg { width: 26px; height: 20px; }
.speaker { width: 32px; }
.speaker svg { width: 24px; height: 20px; }
.battery { width: 42px; }
.battery svg { width: 26px; height: 20px; }
.clock {
  width: 109px;
  display: flex;
  flex-direction: column;
  align-items: flex-end;
  font-size: 17.5px;
  line-height: 25px;
}
.bell { width: 22px; height: 24px; margin-left: 13px; }
```
